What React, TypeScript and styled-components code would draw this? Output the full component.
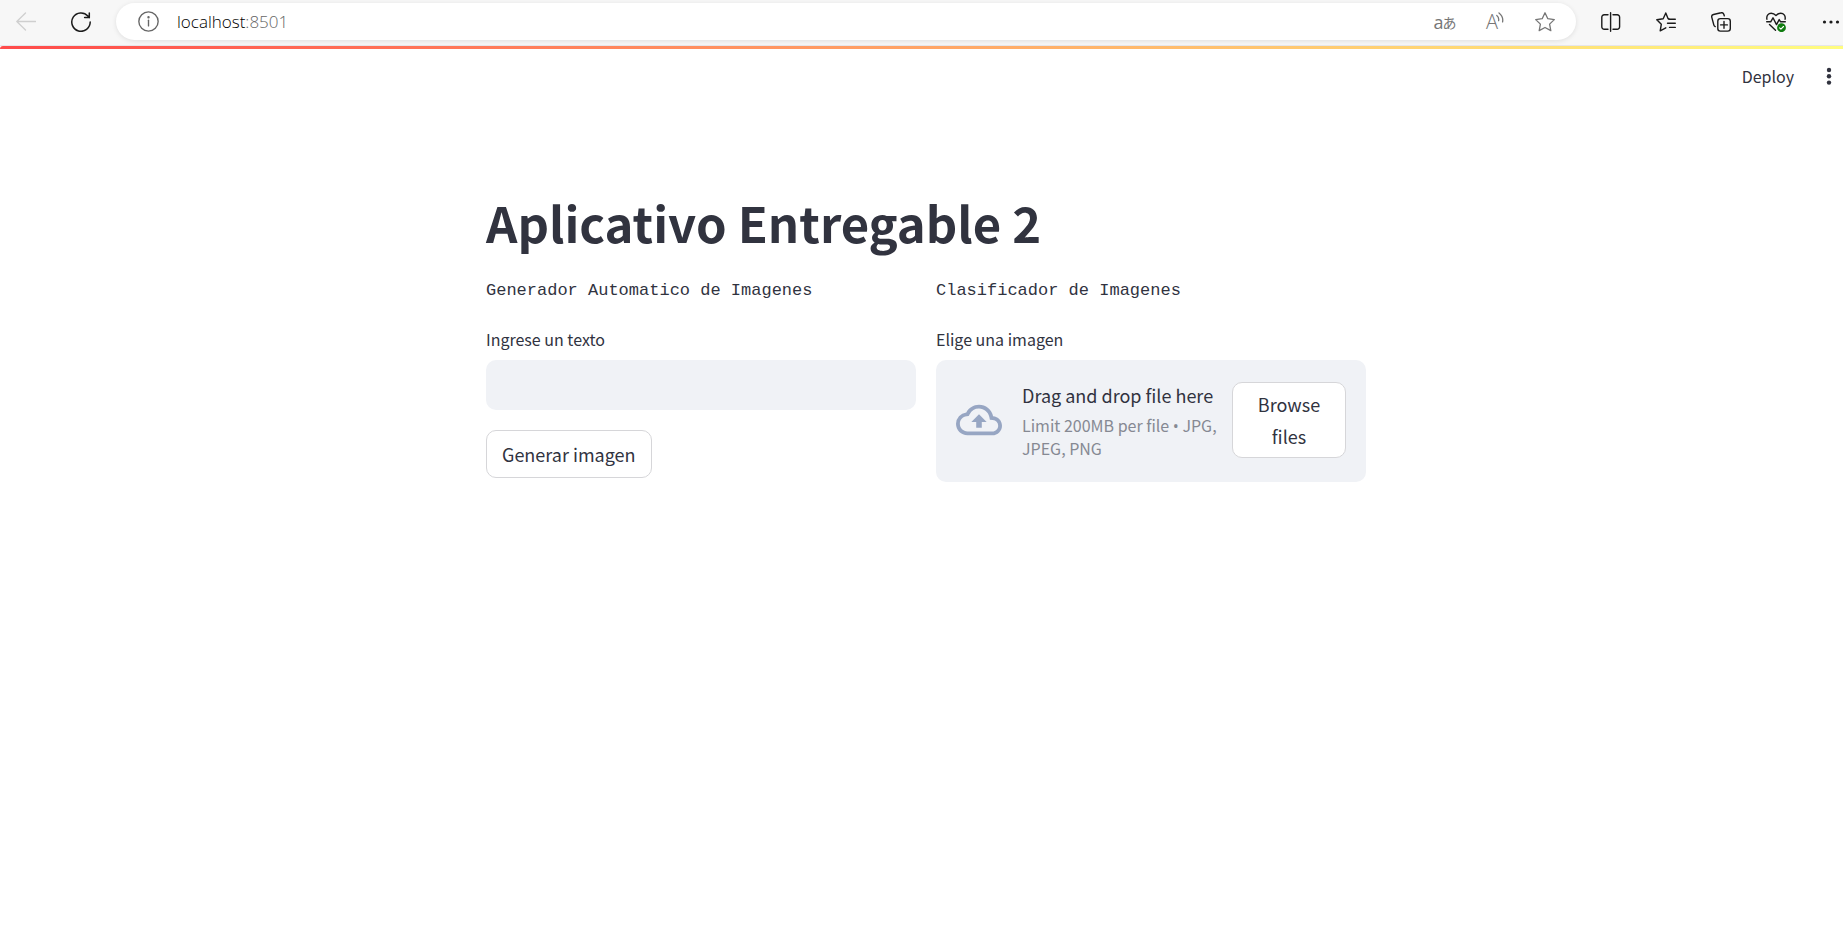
import React from "react";
import styled, { createGlobalStyle } from "styled-components";

const ink = "#31333f";
const sans = `"Noto Sans CJK SC", "Noto Sans", sans-serif`;

const GlobalStyle = createGlobalStyle`
  *, *::before, *::after { box-sizing: border-box; }
  body { margin: 0; background: #fff; color: ${ink}; font-family: ${sans}; }
  button, input { font-family: inherit; }
`;

const BrowserBar = styled.header`
  display: flex;
  align-items: flex-start;
  gap: 35px;
  height: 46px;
  padding: 3px 2px 0 16px;
  background: #f7f7f7;
  border-bottom: 1px solid #e6e6ea;
  overflow: hidden;
`;

const IconButton = styled.button<{ $tone?: string }>`
  display: flex;
  flex: none;
  align-items: center;
  justify-content: center;
  width: 20px;
  height: 38px;
  padding: 0;
  border: 0;
  background: none;
  color: ${(p) => p.$tone ?? "#1b1b1b"};
  white-space: nowrap;
`;

const AddressBar = styled.div`
  display: flex;
  flex: 1;
  align-items: center;
  gap: 30px;
  height: 37px;
  margin: 0 -10px;
  padding: 0 21px 0 22px;
  border-radius: 19px;
  background: #fff;
  box-shadow: 0 1px 5px rgba(0, 0, 0, 0.1);
`;

const Address = styled.div`
  display: flex;
  flex: 1;
  align-items: center;
  gap: 19px;
`;

const Url = styled.span`
  font: 300 17px/24px "Open Sans", sans-serif;
  color: #000;
`;

const Port = styled.span`
  color: #666;
`;

const TranslateGlyph = styled.span`
  display: flex;
  align-items: center;
  font: 18px/24px "Open Sans", sans-serif;
`;

const Kana = styled.span`
  margin-left: -1px;
  font-family: "Noto Sans CJK JP", sans-serif;
  font-size: 14px;
`;

const ReadGlyph = styled.span`
  margin-right: -2px;
  font: 300 20px/24px "Open Sans", sans-serif;
`;

const Decoration = styled.div`
  height: 3px;
  border-top-left-radius: 3px;
  background: linear-gradient(90deg, #ff4b4b, #fffd80);
`;

const AppHeader = styled.div`
  display: flex;
  align-items: center;
  justify-content: flex-end;
  gap: 30px;
  height: 54px;
  padding-right: 9px;
`;

const DeployButton = styled.button`
  padding: 0;
  border: 0;
  background: none;
  color: ${ink};
  font-size: 16px;
  line-height: 28px;
`;

const MenuButton = styled.button`
  display: flex;
  padding: 0;
  border: 0;
  background: none;
  color: ${ink};
`;

const Main = styled.main`
  max-width: 889px;
  margin: 0 auto;
  padding: 86px 0 20px 9px;
`;

const Title = styled.h1`
  margin: 0;
  font-size: 49px;
  font-weight: 700;
  line-height: 66px;
`;

const Columns = styled.div`
  display: grid;
  grid-template-columns: 1fr 1fr;
  gap: 20px;
  margin-top: 22px;
`;

const Column = styled.section`
  display: flex;
  flex-direction: column;
  align-items: flex-start;
  gap: 20px;
`;

const Caption = styled.p`
  margin: 0;
  font: 17px/28px "Liberation Mono", monospace;
`;

const Field = styled.div`
  display: flex;
  flex-direction: column;
  gap: 7px;
  width: 100%;
`;

const Label = styled.label`
  font-size: 16px;
  line-height: 28px;
`;

const TextInput = styled.input`
  width: 100%;
  height: 50px;
  padding: 0 15px;
  border: 0;
  border-radius: 10px;
  background: #f0f2f6;
  color: ${ink};
  font-size: 18px;
`;

const OutlineButton = styled.button`
  padding: 7px 15px;
  border: 1px solid #d6d6d9;
  border-radius: 10px;
  background: #fff;
  color: ${ink};
  font-size: 18px;
  line-height: 32px;
`;

const BrowseButton = styled(OutlineButton)`
  flex: none;
  width: 114px;
  padding: 5px 15px;
`;

const Dropzone = styled.div`
  display: flex;
  align-items: center;
  padding: 20px 20px 23px;
  border-radius: 10px;
  background: #f0f2f6;
`;

const DropText = styled.div`
  flex: 1;
  margin-left: 20px;
`;

const DropTitle = styled.div`
  margin-bottom: 4px;
  font-size: 18px;
  line-height: 30px;
`;

const DropHint = styled.div`
  color: #868993;
  font-size: 16px;
  line-height: 22px;
`;

const Bullet = styled.span`
  font-family: "Open Sans", sans-serif;
`;

const HiddenFile = styled.input`
  display: none;
`;

const Drawing = styled.svg`
  flex: none;
`;

const Stroke = ({ size = 20, width = 1.3, children }: { size?: number; width?: number; children: React.ReactNode }) => (
  <Drawing width={size} height={size} viewBox="0 0 20 20" fill="none" stroke="currentColor" strokeWidth={width} strokeLinecap="round" strokeLinejoin="round" aria-hidden="true">
    {children}
  </Drawing>
);

export default function App() {
  const fileRef = React.useRef<HTMLInputElement>(null);
  return (
    <>
      <GlobalStyle />
      <BrowserBar>
        <IconButton aria-label="Back" $tone="#cfcfcf">
          <Stroke><path d="M19.500 9.500H.8M9.500 1 .8 9.500l8.700 8.500" /></Stroke>
        </IconButton>
        <IconButton aria-label="Refresh">
          <Stroke width={1.5}><path d="M19.200 10a9.200 9.200 0 1 1-2.300-6L18.300 5.600M18.300.9v4.700h-4.700" /></Stroke>
        </IconButton>
        <AddressBar>
          <Address>
            <IconButton aria-label="Site information" $tone="#666">
              <Stroke size={21}><circle cx="10" cy="10" r="9.200" /><path d="M10 8.800v5.400" /><circle cx="10" cy="6" r=".5" fill="currentColor" /></Stroke>
            </IconButton>
            <Url>localhost<Port>:8501</Port></Url>
          </Address>
          <IconButton aria-label="Translate" $tone="#767676"><TranslateGlyph>a<Kana>あ</Kana></TranslateGlyph></IconButton>
          <IconButton aria-label="Read aloud" $tone="#767676">
            <ReadGlyph>A</ReadGlyph>
            <Drawing width="8" height="20" viewBox="0 0 8 20" fill="none" stroke="currentColor" strokeWidth="1.300" strokeLinecap="round" aria-hidden="true">
              <path d="M.8 3.500c1.400 1 2.200 2.800 1.800 5.200M3 .9c3 2.300 4.200 5.500 3.600 9" />
            </Drawing>
          </IconButton>
          <IconButton aria-label="Add to favorites" $tone="#767676">
            <Stroke><path d="m10 .8 2.800 5.900 6.500.9-4.700 4.500 1.200 6.500-5.800-3.100-5.800 3.100 1.200-6.500L.7 7.600l6.500-.9z" /></Stroke>
          </IconButton>
        </AddressBar>
        <IconButton aria-label="Split screen">
          <Stroke width={1.4}><path d="M7 2.800H3.200A2.400 2.400 0 0 0 .8 5.200v9.600a2.400 2.400 0 0 0 2.400 2.400H7M12 2.800h4.200a2.400 2.400 0 0 1 2.400 2.400v9.600a2.400 2.400 0 0 1-2.400 2.400H12M9.600.7v18.600" /></Stroke>
        </IconButton>
        <IconButton aria-label="Favorites">
          <Stroke width={1.4}><path d="M13 6.800h-.9L9.800 1 7.200 6.800.8 7.800l4.500 4.500-1.100 6.500 5.600-3M12.800 7.200H19.300M11.500 11.300h7.800M13.500 15.400h5.800" /></Stroke>
        </IconButton>
        <IconButton aria-label="Collections">
          <Stroke width={1.4}><rect x="6.800" y="6.600" width="12.500" height="12.500" rx="2.600" /><path d="M13 9.500v6.800M9.600 12.900h6.800M4.200 14.600a2.400 2.400 0 0 1-1.400-1.700L.8 5.400a2.400 2.400 0 0 1 1.700-2.900L10 .8a2.400 2.400 0 0 1 2.900 1.700l.4 1.400" /></Stroke>
        </IconButton>
        <IconButton aria-label="Browser essentials">
          <Stroke width={1.4}>
            <path d="M.9 7.200C.2 3.700 2.500 1.200 5.200 1.200c2 0 3.400.8 4.800 2.300 1.400-1.500 2.800-2.300 4.800-2.300 2.700 0 5 2.500 4.300 6M.7 9.800h4l2.300-4 3.500 6.800 2.700-5 1.400 2.200h4.700M3.500 12.500l6 5.700" />
            <circle cx="15.500" cy="15.700" r="4.400" fill="#107c10" stroke="none" />
            <path d="m13.600 15.900 1.300 1.200 2.600-2.600" stroke="#fff" strokeWidth="1.100" />
          </Stroke>
        </IconButton>
        <IconButton aria-label="Settings and more">
          <Drawing width="20" height="20" viewBox="0 0 20 20" fill="currentColor" aria-hidden="true"><circle cx="3.500" cy="10" r="1.600" /><circle cx="10" cy="10" r="1.600" /><circle cx="16.500" cy="10" r="1.600" /></Drawing>
        </IconButton>
      </BrowserBar>
      <Decoration />
      <AppHeader>
        <DeployButton>Deploy</DeployButton>
        <MenuButton aria-label="Main menu">
          <Drawing width="10" height="20" viewBox="0 0 10 20" fill="currentColor" aria-hidden="true"><circle cx="5" cy="4" r="2.200" /><circle cx="5" cy="10.300" r="2.200" /><circle cx="5" cy="16.600" r="2.200" /></Drawing>
        </MenuButton>
      </AppHeader>
      <Main>
        <Title>Aplicativo Entregable 2</Title>
        <Columns>
          <Column>
            <Caption>Generador Automatico de Imagenes</Caption>
            <Field>
              <Label htmlFor="prompt">Ingrese un texto</Label>
              <TextInput id="prompt" type="text" />
            </Field>
            <OutlineButton>Generar imagen</OutlineButton>
          </Column>
          <Column>
            <Caption>Clasificador de Imagenes</Caption>
            <Field>
              <Label htmlFor="image-file">Elige una imagen</Label>
              <Dropzone>
                <Drawing width="46" height="46" viewBox="0 0 24 24" fill="#97a6c3" aria-hidden="true">
                  <path d="M19.350 10.040A7.490 7.490 0 0 0 12 4C9.110 4 6.600 5.640 5.350 8.040A5.994 5.994 0 0 0 0 14c0 3.310 2.690 6 6 6h13c2.760 0 5-2.240 5-5 0-2.640-2.050-4.780-4.650-4.960zM19 18H6c-2.210 0-4-1.790-4-4 0-2.050 1.530-3.760 3.560-3.970l1.070-.11.5-.95A5.469 5.469 0 0 1 12 6c2.620 0 4.880 1.860 5.390 4.430l.3 1.500 1.530.11A2.980 2.980 0 0 1 22 15c0 1.650-1.350 3-3 3zM8 13h2.550v3h2.900v-3H16l-4-4z" />
                </Drawing>
                <DropText>
                  <DropTitle>Drag and drop file here</DropTitle>
                  <DropHint>
                    Limit 200MB per file <Bullet>•</Bullet> JPG,
                    <br />
                    JPEG, PNG
                  </DropHint>
                </DropText>
                <HiddenFile ref={fileRef} id="image-file" type="file" accept=".jpg,.jpeg,.png" />
                <BrowseButton onClick={() => fileRef.current?.click()}>Browse files</BrowseButton>
              </Dropzone>
            </Field>
          </Column>
        </Columns>
      </Main>
    </>
  );
}
